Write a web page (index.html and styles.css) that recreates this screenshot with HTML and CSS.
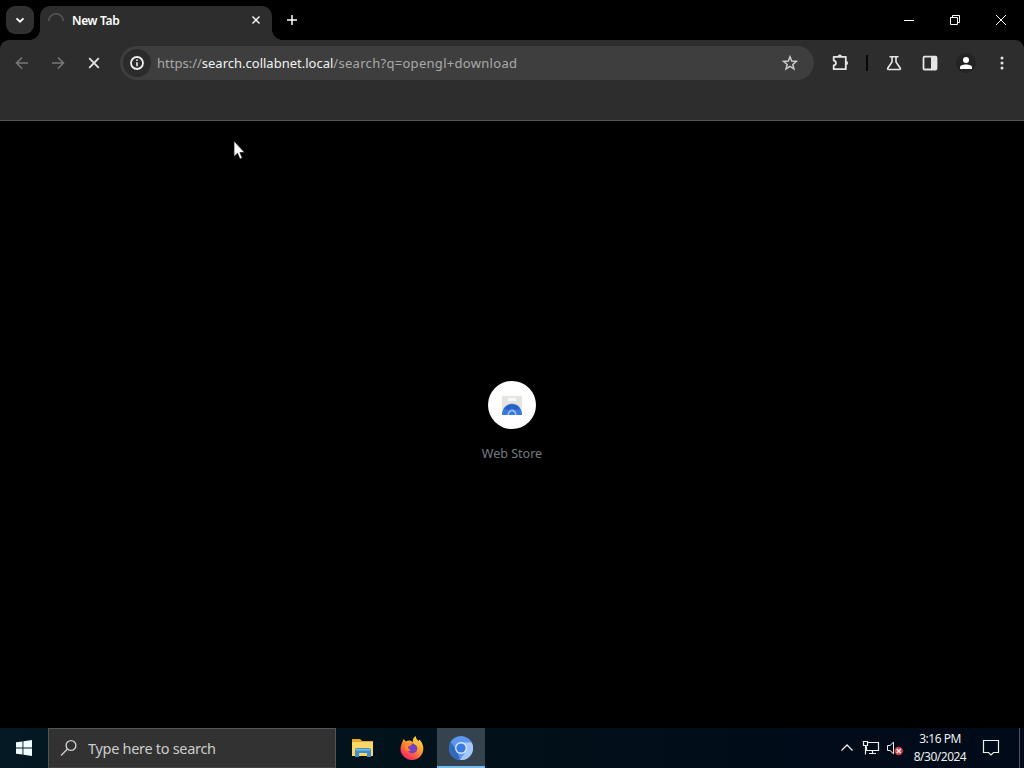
FILE: index.html
```html
<!DOCTYPE html>
<html lang="en">
<head>
<meta charset="utf-8">
<title>New Tab</title>
<link rel="stylesheet" href="styles.css">
</head>
<body>
<div class="desktop">
  <header class="tabstrip">
    <button class="tab-search"><svg width="28" height="28" viewBox="0 0 28 28"><path d="M10.500 12.300 14 15.700l3.500-3.400" class="s18"/></svg></button>
    <div class="tab">
      <svg class="spinner" width="16" height="16" viewBox="0 0 16 16"><path d="M.8 8A7.200 7.200 0 0 1 15.200 8"/></svg>
      <span class="tab-title">New Tab</span>
      <svg class="tab-close" width="16" height="16" viewBox="0 0 16 16"><path d="m4.500 3.500 7 7m0-7-7 7"/></svg>
    </div>
    <svg class="new-tab" width="16" height="16" viewBox="0 0 16 16"><path d="M8 3v10M3 8h10"/></svg>
    <div class="window-controls">
      <svg width="46" height="40" viewBox="0 0 46 40"><path d="M18 20.500h10"/></svg>
      <svg width="46" height="40" viewBox="0 0 46 40"><path d="M18.500 17.500h7v7h-7zM20.500 17.500v-2h7v7h-2"/></svg>
      <svg width="46" height="40" viewBox="0 0 46 40"><path d="m18 15 10 10m0-10-10 10"/></svg>
    </div>
  </header>
  <section class="toolbar">
    <div class="toolbar-row">
      <svg class="nav dim" width="36" height="34" viewBox="0 0 36 34"><path d="M24 17H13m5-5.500L12.500 17l5.500 5.500"/></svg>
      <svg class="nav dim" width="36" height="34" viewBox="0 0 36 34"><path d="M12 17h11m-5-5.500 5.500 5.500-5.500 5.500"/></svg>
      <svg class="nav" width="36" height="34" viewBox="0 0 36 34"><path d="m13.200 12.200 9.600 9.600m0-9.600-9.600 9.600" class="s18"/></svg>
      <div class="omnibox">
        <span class="site-info"><svg width="28" height="28" viewBox="0 0 28 28"><circle cx="14" cy="14" r="6" class="s18"/><path d="M14 13.300v4M14 10.500v1.500"/></svg></span>
        <span class="url">https://<b>search.collabnet.local</b><span class="path">/search?q=opengl+download</span></span>
        <svg class="star" width="20" height="20" viewBox="0 0 20 20"><path d="m10 3.700 1.700 4.300 4.700.4-3.600 3 1.150 4.500L10 13.450 6.050 15.900 7.200 11.400l-3.600-3 4.700-.4z"/></svg>
      </div>
      <div class="actions">
        <svg width="36" height="34" viewBox="0 0 36 34"><path d="M11.700 10.800h12.100v12.400H11.700v-3.700c3-.4 3-4.500 0-4.900z" class="s18" stroke-linejoin="round"/><path d="M15.700 10.500a2.100 2.100 0 0 1 4.200 0zM24 14.900a2.100 2.100 0 0 1 0 4.200z" class="fill"/></svg>
        <i class="divider"></i>
        <svg width="36" height="34" viewBox="0 0 36 34"><path d="M13.500 10.800h9M16 11v5l-4.300 6.200q-.5 1.300.8 1.300h11q1.300 0 .8-1.300L20 16v-5"/></svg>
        <svg width="36" height="34" viewBox="0 0 36 34"><rect x="11.500" y="10.700" width="13" height="12.800" rx="1" class="s18"/><path d="M19 10.500h5.500v13H19z" class="fill"/></svg>
        <svg class="profile" width="36" height="34" viewBox="0 0 36 34"><circle cx="18" cy="17" r="10"/><path d="M12 23v-1.800c0-1.800 3-2.800 6-2.800s6 1 6 2.800V23z" class="fill"/><circle cx="18" cy="14" r="3" class="fill"/></svg>
        <svg width="36" height="34" viewBox="0 0 36 34"><circle cx="18" cy="12" r="1.500" class="fill"/><circle cx="18" cy="17" r="1.500" class="fill"/><circle cx="18" cy="22" r="1.500" class="fill"/></svg>
      </div>
    </div>
  </section>
  <main class="page">
    <div class="shortcut">
      <span class="shortcut-icon"><svg width="24" height="24" viewBox="0 0 24 24"><path fill="#e4e4e1" d="M2 3h20v19H2z"/><path fill="#f7f7f5" d="M8 5h8v3H8z"/><path fill="#3c78dc" d="M2 22C2 7 22 7 22 22z"/><path fill="#2861c4" d="M4 16c3-6 13-6 16 0l-5 1q-3-3-6 0z"/><path fill="#9fc3f8" d="M7.500 22c0-7 9-7 9 0z"/><path fill="#347ce8" d="M9 22c0-5 6-5 6 0z"/></svg></span>
      <span class="shortcut-label">Web Store</span>
    </div>
  </main>
  <footer class="taskbar">
    <div class="start"><svg width="16" height="16" viewBox="0 0 16 16"><path d="M0 2.300 6.500 1.400v6.100H0zM7.400 1.300 16 0v7.500H7.400zM0 8.400h6.500v6.200L0 13.700zM7.400 8.400H16V16l-8.600-1.200z"/></svg></div>
    <div class="search">
      <svg width="18" height="18" viewBox="0 0 18 18"><circle cx="11" cy="6.500" r="4.900"/><path d="M7.500 10 1 16.500"/></svg>
      <span>Type here to search</span>
    </div>
    <div class="apps">
      <div class="app"><svg width="24" height="24" viewBox="0 0 24 24"><path fill="#e8a929" d="M1 3h8l2 2h11v4H1z"/><path fill="#fbd766" d="M1 6h21v14H1z"/><path fill="#438fc4" d="M4 21v-7q0-2 2-2h12q2 0 2 2v7h-4v-3q0-1-1-1H9q-1 0-1 1v3z"/><path fill="#75bee4" d="M5 13h14v1.500H5z"/></svg></div>
      <div class="app"><svg width="24" height="24" viewBox="0 0 24 24"><defs><linearGradient id="fire" x1=".85" y1="0" x2=".2" y2="1"><stop offset="0" stop-color="#ffe34b"/><stop offset=".45" stop-color="#ff982e"/><stop offset=".8" stop-color="#ff4052"/><stop offset="1" stop-color="#e2257c"/></linearGradient></defs><path fill="url(#fire)" d="M2 7 3.500 3 6 5.500q2-1.500 4-1l3 1.500Q12 3 15.500 0q.5 3 3 5l1-1.500q4 4.500 3.800 9.500C23 19.500 18 24 12 24S.5 19 .5 13q0-3 1.500-6z"/><circle cx="12.300" cy="12.500" r="5" fill="#7741bd"/><path fill="#ff8b27" d="M5 7q3-1 7 1-1 2-4 2.500 0 3 3 3.500-3 2.500-6-1z"/><path fill="#ffc638" d="M14 5q5 2 5 7-1-3-5-4z"/></svg></div>
      <div class="app active"><svg width="24" height="24" viewBox="0 0 24 24"><circle cx="12" cy="12" r="12" fill="#5d96ee"/><path fill="#3069c0" d="M1.600 6 8 14.500 11 24A12 12 0 0 1 1.600 6z"/><path fill="#a5c8fb" d="M12 6.500h10.700A12 12 0 0 1 11 24l5.500-8z"/><circle cx="12" cy="12" r="6" fill="#d9e8fe"/><circle cx="12" cy="12" r="4.600" fill="#387be0"/></svg></div>
    </div>
    <div class="tray">
      <svg width="14" height="16" viewBox="0 0 14 16"><path d="m1.500 10.500 5.500-5.500 5.500 5.500" stroke-width="1.300"/></svg>
      <svg class="net" width="18" height="16" viewBox="0 0 18 16"><path d="M5.500 2.500h11v8H4.500v-4M1.500 1.500h4v4h-4zM3.500 5.500v9M10.500 10.500v3M7 13.500h7" stroke-width="1.200"/></svg>
      <svg class="sound" width="18" height="16" viewBox="0 0 18 16"><path d="M1.500 5.500H4l3.500-3.300v11.600L4 10.500H1.500z"/><circle cx="12.700" cy="11" r="4.200" class="mute"/><path d="m10.700 9 4 4m0-4-4 4" stroke-width="1.400"/></svg>
      <div class="clock"><span>3:16 PM</span><span class="date">8/30/2024</span></div>
      <svg class="note" width="18" height="18" viewBox="0 0 18 18"><path d="M1.500 1.500h15v12h-5L9 16l-2.500-2.500h-5z" stroke-width="1.200"/></svg>
      <i class="show-desktop"></i>
    </div>
  </footer>
  <svg class="cursor" width="14" height="20" viewBox="0 0 14 20"><path d="M1 1v15.600l3.500-3.300 2.400 5.700 2.400-1-2.400-5.500h4.700z"/></svg>
</div>
</body>
</html>
```
FILE: styles.css
```css
* { box-sizing: border-box; }
body { margin: 0; background: #000; font-family: "Noto Sans", "Open Sans", sans-serif; }
svg { display: block; flex: none; fill: none; stroke: currentColor; }
.desktop { position: relative; width: 1024px; height: 768px; display: flex; flex-direction: column; overflow: hidden; color: #e5e5e5; }
.s18 { stroke-width: 1.8; }
.fill { fill: currentColor; stroke: none; }

.tabstrip { height: 40px; display: flex; align-items: center; padding-left: 6px; color: #fff; }
.tab-search { width: 28px; height: 28px; padding: 0; border: 0; border-radius: 9px; background: #303030; color: #fff; }
.tab { position: relative; align-self: flex-end; width: 232px; height: 34px; margin-left: 6px; padding: 0 8px 5px; display: flex; align-items: center; border-radius: 10px 10px 0 0; background: #2d2d2d; }
.tab::before, .tab::after { content: ""; position: absolute; bottom: 0; width: 10px; height: 10px; }
.tab::before { left: -10px; background: radial-gradient(circle at 0 0, transparent 9.5px, #2d2d2d 10px); }
.tab::after { right: -10px; background: radial-gradient(circle at 100% 0, transparent 9.5px, #2d2d2d 10px); }
.spinner { color: #555; stroke-width: 1.6; }
.tab-title { flex: 1; margin-left: 8px; font-size: 12px; font-weight: 600; letter-spacing: -.35px; }
.tab-close { stroke-width: 1.4; }
.new-tab { margin-left: 12px; stroke-width: 1.5; }
.window-controls { display: flex; margin-left: auto; }

.toolbar { height: 81px; padding-top: 6px; border-bottom: 1px solid #555; border-radius: 9px 9px 0 0; background: #2d2d2d; }
.toolbar-row { height: 34px; padding-left: 4px; display: flex; align-items: center; }
.nav { stroke-width: 1.6; }
.dim { color: #777; }
.omnibox { width: 694px; height: 34px; margin-left: 8px; padding: 0 14px 0 3px; display: flex; align-items: center; border-radius: 17px; background: #3e3e3e; }
.site-info { width: 28px; height: 28px; border-radius: 50%; background: #2b2b2b; color: #eee; stroke-width: 1.6; }
.url { flex: 1; margin-left: 6px; color: #aaa; font-size: 13px; white-space: nowrap; }
.url b { color: #f2f2f2; font-weight: 400; }
.path { letter-spacing: .3px; }
.star { color: #ccc; stroke-width: 1.5; }
.actions { display: flex; align-items: center; margin-left: 8px; stroke-width: 1.6; }
.divider { width: 2px; height: 16px; margin: 0 8px; background: #080808; }
.profile { color: #fff; }
.profile > circle:first-child { fill: #242424; stroke: none; }

.page { flex: 1; display: flex; justify-content: center; padding-top: 260px; background: #000; }
.shortcut { display: flex; flex-direction: column; align-items: center; }
.shortcut-icon { width: 48px; height: 48px; border-radius: 50%; background: #fff; display: grid; place-items: center; }
.shortcut-icon svg { stroke: none; }
.shortcut-label { margin-top: 16px; color: #747a80; font-size: 12.5px; line-height: 18px; }

.taskbar { height: 40px; display: flex; background: linear-gradient(90deg, #041923, #021019 50%, #010b19 80%, #000a18); color: #eee; }
.start { width: 48px; display: grid; place-items: center; color: #effbff; }
.start path { fill: currentColor; stroke: none; }
.search { width: 288px; display: flex; align-items: center; padding-left: 11px; border: 1px solid #505659; border-bottom-color: #444; background: #323232; color: #ccc; font-size: 14.5px; letter-spacing: -.3px; }
.search svg { stroke-width: 1.4; }
.search span { margin-left: 10px; }
.apps { display: flex; margin-left: 3px; }
.app { width: 48px; display: grid; place-items: center; margin-right: 1px; }
.app svg { stroke: none; }
.active { background: #34434d; border-bottom: 2px solid #76b9ed; }
.active svg { margin-top: 2px; }
.tray { margin-left: auto; display: flex; align-items: center; }
.net { margin-left: 8px; }
.sound { margin-left: 6px; }
.mute { fill: #d83d4a; stroke: none; }
.clock { width: 72px; display: flex; flex-direction: column; align-items: center; font-size: 12px; line-height: 18px; letter-spacing: -.5px; }
.note { margin-left: 6px; }
.show-desktop { align-self: stretch; width: 5px; margin-left: 19px; border-left: 1px solid #4c5660; }
.cursor { position: absolute; left: 233px; top: 140px; }
.cursor path { fill: #fff; stroke: #111; stroke-width: .7; }
```
